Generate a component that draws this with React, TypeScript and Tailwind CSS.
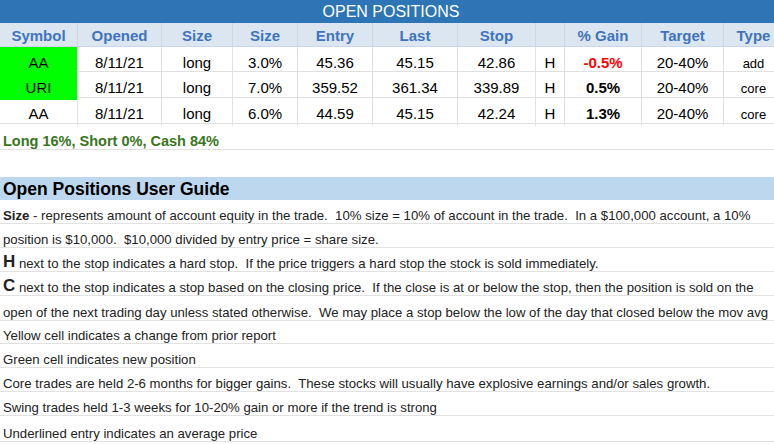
import React from "react";

const cols = "grid grid-cols-[78px_84px_71px_65px_75px_85px_78px_29px_77px_82px_60px]";

const headers = ["Symbol", "Opened", "Size", "Size", "Entry", "Last", "Stop", "", "% Gain", "Target", "Type"];

type Row = {
  sym: string;
  green: boolean;
  opened: string;
  side: string;
  size: string;
  entry: string;
  last: string;
  stop: string;
  h: string;
  gain: string;
  neg: boolean;
  target: string;
  type: string;
  height: string;
};

const rows: Row[] = [
  { sym: "AA", green: true, opened: "8/11/21", side: "long", size: "3.0%", entry: "45.36", last: "45.15", stop: "42.86", h: "H", gain: "-0.5%", neg: true, target: "20-40%", type: "add", height: "h-[25px]" },
  { sym: "URI", green: true, opened: "8/11/21", side: "long", size: "7.0%", entry: "359.52", last: "361.34", stop: "339.89", h: "H", gain: "0.5%", neg: false, target: "20-40%", type: "core", height: "h-[26px]" },
  { sym: "AA", green: false, opened: "8/11/21", side: "long", size: "6.0%", entry: "44.59", last: "45.15", stop: "42.24", h: "H", gain: "1.3%", neg: false, target: "20-40%", type: "core", height: "h-[26px]" },
];

function Cell({ children, className = "" }: { children?: React.ReactNode; className?: string }) {
  return (
    <div className={`flex items-center justify-center border-r border-[#e0e0e0] pt-[5px] whitespace-nowrap ${className}`}>
      {children}
    </div>
  );
}

function GuideRow({ children, h = "h-[24px]" }: { children?: React.ReactNode; h?: string }) {
  return (
    <div className={`${h} border-b border-[#e2e2e2] flex items-end pb-[1px] pl-[3px] text-[13.2px] leading-none text-[#222] whitespace-pre`}>
      {children}
    </div>
  );
}

export default function App() {
  return (
    <div className="w-[774px] h-[444px] overflow-hidden bg-white" style={{ fontFamily: '"Liberation Sans", Arial, sans-serif' }}>
      <div className="h-[23px] bg-[#2e75b6] text-white text-[16px] flex items-center justify-center pl-[8px] leading-none">
        OPEN POSITIONS
      </div>
      <div className={`${cols} h-[24px] bg-[#dce6f1] border-b border-[#c9d6e6]`}>
        {headers.map((h, i) => (
          <div key={i} className="flex items-center justify-center border-r border-[#c9d6e6] pt-[2px] text-[15px] font-bold text-[#3f74bd] whitespace-nowrap">
            {h}
          </div>
        ))}
      </div>
      {rows.map((r, i) => (
        <div key={i} className={`${cols} ${r.height} border-b border-[#e0e0e0] text-[15px] text-black`}>
          <Cell className={r.green ? "bg-[#00ff00]" : ""}>{r.sym}</Cell>
          <Cell>{r.opened}</Cell>
          <Cell>{r.side}</Cell>
          <Cell>{r.size}</Cell>
          <Cell>{r.entry}</Cell>
          <Cell>{r.last}</Cell>
          <Cell>{r.stop}</Cell>
          <Cell>{r.h}</Cell>
          <Cell className={`font-bold ${r.neg ? "text-[#ff0000]" : ""}`}>{r.gain}</Cell>
          <Cell>{r.target}</Cell>
          <Cell className="text-[13px]">{r.type}</Cell>
        </div>
      ))}
      <div className="h-[26px] border-b border-[#e2e2e2] flex items-end pb-[1px] pl-[3px] text-[14.5px] leading-none font-bold text-[#38761d]">
        Long 16%, Short 0%, Cash 84%
      </div>
      <div className="h-[27px]" />
      <div className="h-[23px] bg-[#bdd7ee] flex items-center pl-[3px] pt-[2px] text-[17.5px] leading-none font-bold text-black">
        Open Positions User Guide
      </div>
      <GuideRow>
        <b>Size</b>{" - represents amount of account equity in the trade.  10% size = 10% of account in the trade.  In a $100,000 account, a 10%"}
      </GuideRow>
      <GuideRow>{"position is $10,000.  $10,000 divided by entry price = share size."}</GuideRow>
      <GuideRow>
        <b className="text-[17px] leading-none">H</b>{" next to the stop indicates a hard stop.  If the price triggers a hard stop the stock is sold immediately."}
      </GuideRow>
      <GuideRow>
        <b className="text-[17px] leading-none">C</b>{" next to the stop indicates a stop based on the closing price.  If the close is at or below the stop, then the position is sold on the"}
      </GuideRow>
      <GuideRow h="h-[25px]">{"open of the next trading day unless stated otherwise.  We may place a stop below the low of the day that closed below the mov avg"}</GuideRow>
      <GuideRow h="h-[23px]">{"Yellow cell indicates a change from prior report"}</GuideRow>
      <GuideRow>{"Green cell indicates new position"}</GuideRow>
      <GuideRow>{"Core trades are held 2-6 months for bigger gains.  These stocks will usually have explosive earnings and/or sales growth."}</GuideRow>
      <GuideRow>{"Swing trades held 1-3 weeks for 10-20% gain or more if the trend is strong"}</GuideRow>
      <GuideRow h="h-[26px]">{"Underlined entry indicates an average price"}</GuideRow>
    </div>
  );
}
